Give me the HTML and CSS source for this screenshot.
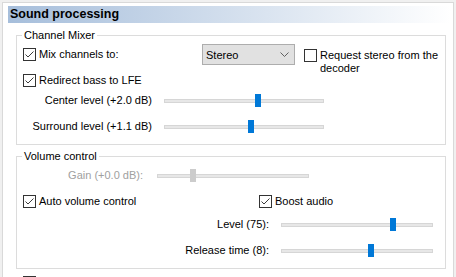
FILE: index.html
```html
<!DOCTYPE html>
<html lang="en">
  <head>
    <meta charset="UTF-8" />
    <meta name="viewport" content="width=device-width, initial-scale=1.0" />
    <title>Sound processing</title>
    <link rel="stylesheet" href="styles.css">
  </head>
  <body>
    <div class="page">
      <div class="title">Sound processing</div>

      <fieldset class="group">
        <legend>Channel Mixer</legend>
        <div class="group-body">
          <div class="row-mix">
            <label class="check mix">
              <span class="box"><svg width="11" height="11" viewBox="0 0 11 11"><path d="M1.5 5.5 L4 8 L9.5 2.5" fill="none" stroke="#3c3c3c"/></svg></span>
              Mix channels to:
            </label>
            <div class="combo">
              <span>Stereo</span>
              <svg width="9" height="5" viewBox="0 0 9 5"><path d="M0.5 0.5 L4.5 4.5 L8.5 0.5" fill="none" stroke="#606060"/></svg>
            </div>
            <label class="check stereo">
              <span class="box"></span>
              <span>Request stereo from the decoder</span>
            </label>
          </div>

          <label class="check redirect">
            <span class="box"><svg width="11" height="11" viewBox="0 0 11 11"><path d="M1.5 5.5 L4 8 L9.5 2.5" fill="none" stroke="#3c3c3c"/></svg></span>
            Redirect bass to LFE
          </label>

          <div class="srow center">
            <span class="slabel mixer">Center level (+2.0 dB)</span>
            <div class="slider wide">
              <div class="track"></div>
              <div class="thumb" style="left: 91px"></div>
            </div>
          </div>

          <div class="srow surround">
            <span class="slabel mixer">Surround level (+1.1 dB)</span>
            <div class="slider wide">
              <div class="track"></div>
              <div class="thumb" style="left: 84px"></div>
            </div>
          </div>
        </div>
      </fieldset>

      <fieldset class="group">
        <legend>Volume control</legend>
        <div class="group-body">
          <div class="srow gain">
            <span class="slabel disabled">Gain (+0.0 dB):</span>
            <div class="slider">
              <div class="track"></div>
              <div class="thumb off" style="left: 33px"></div>
            </div>
          </div>

          <div class="row-auto">
            <label class="check auto">
              <span class="box"><svg width="11" height="11" viewBox="0 0 11 11"><path d="M1.5 5.5 L4 8 L9.5 2.5" fill="none" stroke="#3c3c3c"/></svg></span>
              Auto volume control
            </label>
            <label class="check">
              <span class="box"><svg width="11" height="11" viewBox="0 0 11 11"><path d="M1.5 5.5 L4 8 L9.5 2.5" fill="none" stroke="#3c3c3c"/></svg></span>
              Boost audio
            </label>
          </div>

          <div class="srow level">
            <span class="slabel auto-label">Level (75):</span>
            <div class="slider">
              <div class="track"></div>
              <div class="thumb" style="left: 109px"></div>
            </div>
          </div>

          <div class="srow release">
            <span class="slabel auto-label">Release time (8):</span>
            <div class="slider">
              <div class="track"></div>
              <div class="thumb" style="left: 87px"></div>
            </div>
          </div>
        </div>
      </fieldset>

      <label class="check last">
        <span class="box"></span>
        Time shift
      </label>
    </div>
  </body>
</html>
```

FILE: styles.css
```css
html,
body {
  height: 277px;
  overflow: hidden;
}

body {
  margin: 0;
  padding: 2px 0 0 2px;
  box-sizing: border-box;
  background-color: #f0f0f0;
  font-family: "Liberation Sans", Arial, sans-serif;
  font-size: 11px;
  color: #000;
}

.page {
  width: 452px;
  min-height: 280px;
  box-sizing: border-box;
  background: white;
  border: 1px solid #d9d9d9;
  border-bottom: none;
  padding-top: 3px;
}

.title {
  margin: 0 2px 0 5px;
  height: 17px;
  line-height: 17px;
  padding-left: 2px;
  font-size: 12.5px;
  font-weight: bold;
  background: linear-gradient(to right, #a6bedb, #ffffff);
}

/* group boxes */
.group {
  margin: 6px 0 0 13px;
  padding: 0;
  width: 430px;
  min-width: 0;
  box-sizing: border-box;
  border: 1px solid #dcdcdc;
}

.group + .group {
  margin-top: 5px;
}

.group legend {
  margin-left: 5px;
  padding: 0 2px;
  line-height: 13px;
}

.group-body {
  padding: 2px 0 11px 6px;
}

/* checkboxes */
.check {
  display: flex;
  align-items: center;
  gap: 3px;
  line-height: 13px;
}

.box {
  flex: none;
  width: 13px;
  height: 13px;
  box-sizing: border-box;
  border: 1px solid #333;
  background: white;
}

.box svg {
  display: block;
}

.row-mix {
  display: flex;
  align-items: flex-start;
  height: 21px;
}

.mix {
  width: 179px;
  height: 21px;
}

.combo {
  width: 93px;
  height: 21px;
  box-sizing: border-box;
  margin-right: 9px;
  padding: 0 5px 0 3px;
  display: flex;
  align-items: center;
  justify-content: space-between;
  border: 1px solid #adadad;
  background-color: #e1e1e1;
}

.stereo {
  flex: 1;
  margin-top: 5px;
  align-items: flex-start;
  padding-right: 4px;
}

.redirect {
  margin-top: 9px;
}

/* sliders */
.srow {
  display: flex;
  align-items: center;
  height: 13px;
}

.slabel {
  text-align: right;
  line-height: 13px;
}

.slabel.mixer {
  width: 129px;
  margin-right: 12px;
}

.slabel.disabled {
  width: 120px;
  margin-right: 14px;
  color: #a0a0a0;
}

.slabel.auto-label {
  width: 246px;
  margin-right: 12px;
}

.slider {
  position: relative;
  width: 152px;
  height: 13px;
}

.slider.wide {
  width: 160px;
}

.track {
  margin-top: 5px;
  height: 4px;
  box-sizing: border-box;
  border: 1px solid #d6d6d6;
  background-color: #e7e7e7;
}

.thumb {
  position: absolute;
  top: 0;
  width: 6px;
  height: 13px;
  background-color: #0078d7;
}

.thumb.off {
  background-color: #cccccc;
}

.center {
  margin-top: 7px;
}

.surround {
  margin-top: 13px;
}

.gain {
  margin-top: 4px;
}

.row-auto {
  display: flex;
  margin-top: 13px;
}

.auto {
  width: 236px;
}

.level {
  margin-top: 10px;
}

.release {
  margin-top: 13px;
}

.last {
  margin: 7px 0 0 20px;
}
```
